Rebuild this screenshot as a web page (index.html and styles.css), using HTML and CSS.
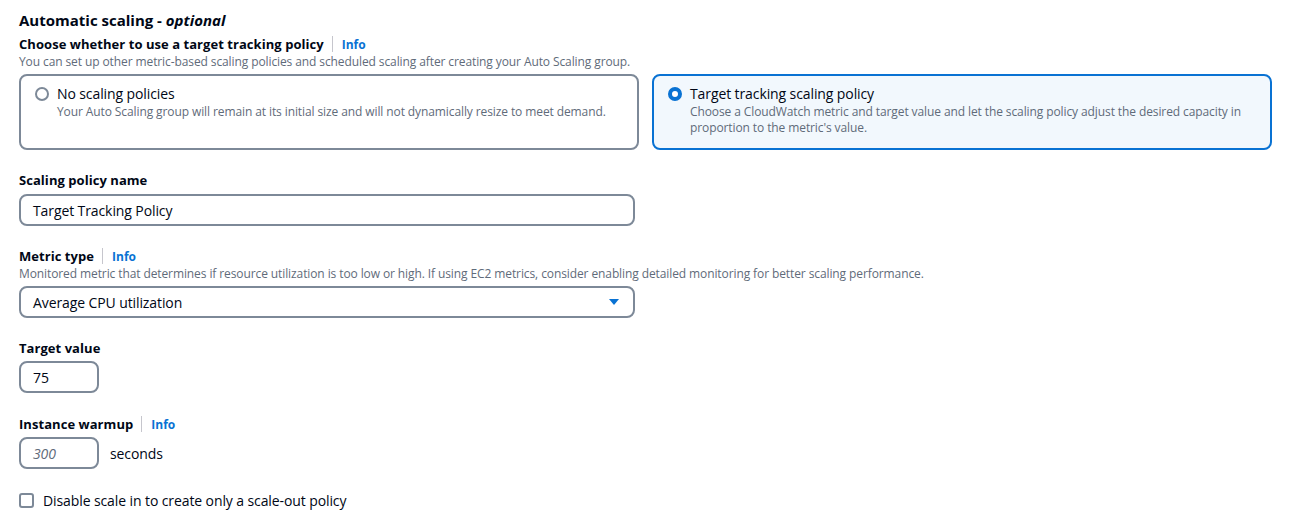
FILE: index.html
```html
<!DOCTYPE html>
<html>
<head>
<meta charset="utf-8">
<link rel="stylesheet" href="styles.css">
</head>
<body>
<div class="page">
  <h2 class="section-title">Automatic scaling - <i>optional</i></h2>
  <div class="label-row"><span class="label">Choose whether to use a target tracking policy</span><span class="sep"></span><a class="info">Info</a></div>
  <div class="desc">You can set up other metric-based scaling policies and scheduled scaling after creating your Auto Scaling group.</div>
  <div class="tiles">
    <div class="tile">
      <span class="radio"></span>
      <div class="tile-text">
        <div class="tile-title">No scaling policies</div>
        <div class="tile-desc">Your Auto Scaling group will remain at its initial size and will not dynamically resize to meet demand.</div>
      </div>
    </div>
    <div class="tile selected">
      <span class="radio checked"></span>
      <div class="tile-text">
        <div class="tile-title">Target tracking scaling policy</div>
        <div class="tile-desc">Choose a CloudWatch metric and target value and let the scaling policy adjust the desired capacity in proportion to the metric's value.</div>
      </div>
    </div>
  </div>

  <div class="field f-name">
    <div class="label-row"><span class="label">Scaling policy name</span></div>
    <div class="input wide">Target Tracking Policy</div>
  </div>

  <div class="field f-metric">
    <div class="label-row"><span class="label">Metric type</span><span class="sep"></span><a class="info">Info</a></div>
    <div class="desc">Monitored metric that determines if resource utilization is too low or high. If using EC2 metrics, consider enabling detailed monitoring for better scaling performance.</div>
    <div class="input wide select">Average CPU utilization
      <svg class="caret" width="12" height="12" viewBox="0 0 12 12"><path d="M1 3h10L6 9z" fill="#0972d3"/></svg>
    </div>
  </div>

  <div class="field f-target">
    <div class="label-row"><span class="label">Target value</span></div>
    <div class="input small">75</div>
  </div>

  <div class="field f-warm">
    <div class="label-row"><span class="label">Instance warmup</span><span class="sep"></span><a class="info">Info</a></div>
    <div class="warm-row">
      <div class="input small placeholder">300</div>
      <span class="unit">seconds</span>
    </div>
  </div>

  <label class="check-row"><span class="checkbox"></span><span>Disable scale in to create only a scale-out policy</span></label>
</div>
</body>
</html>
```

FILE: styles.css
```css
* { box-sizing: border-box; }
body {
  margin: 0;
  font-family: "Open Sans", "Noto Sans", sans-serif;
  color: #000716;
  background: #fff;
}
.page {
  padding: 10px 17px 0 19px;
}
.section-title {
  margin: 0;
  font-size: 15px;
  font-weight: 700;
  line-height: 20px;
}
.section-title i { font-weight: 700; }
.label-row {
  display: flex;
  align-items: center;
  height: 22px;
  margin-top: 3px;
}
.label {
  font-size: 13px;
  font-weight: 700;
  letter-spacing: 0.05px;
}
.sep {
  width: 1px;
  height: 16px;
  background: #c6c6cd;
  margin: 0 9px 0 8px;
}
.info {
  color: #0972d3;
  font-size: 12px;
  font-weight: 700;
}
.desc {
  font-size: 12px;
  color: #5f6b7a;
  line-height: 14px;
  letter-spacing: -0.1px;
}
.tiles {
  display: flex;
  gap: 13px;
  margin-top: 5px;
}
.tile {
  flex: 0 0 620px;
  height: 76px;
  border: 2px solid #7d8998;
  border-radius: 8px;
  display: flex;
  align-items: flex-start;
  padding: 9px 14px;
}
.tile.selected {
  border-color: #0972d3;
  background: #f2f8fd;
}
.radio {
  width: 14px;
  height: 14px;
  border-radius: 50%;
  border: 2px solid #7d8998;
  background: #fff;
  margin-top: 2px;
  margin-right: 8px;
  flex: none;
}
.radio.checked {
  border: 4px solid #0972d3;
}
.tile-title {
  font-size: 14px;
  line-height: 18px;
  letter-spacing: -0.1px;
}
.tile-desc {
  margin-top: 1px;
  font-size: 12px;
  line-height: 16px;
  color: #5f6b7a;
  letter-spacing: -0.1px;
}
.field { margin-top: 19px; }
.f-name .label-row { margin-bottom: 3px; }
.f-metric { margin-top: 19px; }
.f-metric .desc { margin-bottom: 5px; }
.f-target { margin-top: 19px; }
.f-target .label-row { margin-bottom: 2px; }
.f-warm { margin-top: 20px; }
.f-warm .label-row { margin-bottom: 2px; }
.input {
  height: 32px;
  border: 2px solid #7d8998;
  border-radius: 8px;
  display: flex;
  align-items: center;
  padding: 0 12px;
  font-size: 14px;
  letter-spacing: -0.1px;
  background: #fff;
}
.input.wide { width: 616px; }
.input.small { width: 80px; }
.select { justify-content: space-between; padding-right: 13px; }
.placeholder { color: #5f6b7a; font-style: italic; }
.warm-row {
  display: flex;
  align-items: center;
  gap: 11px;
}
.unit { font-size: 14px; letter-spacing: -0.1px; }
.check-row {
  display: flex;
  align-items: center;
  gap: 9px;
  margin-top: 22px;
  font-size: 14px;
  letter-spacing: -0.1px;
}
.checkbox {
  width: 15px;
  height: 15px;
  border: 2px solid #7d8998;
  border-radius: 3px;
}
```
